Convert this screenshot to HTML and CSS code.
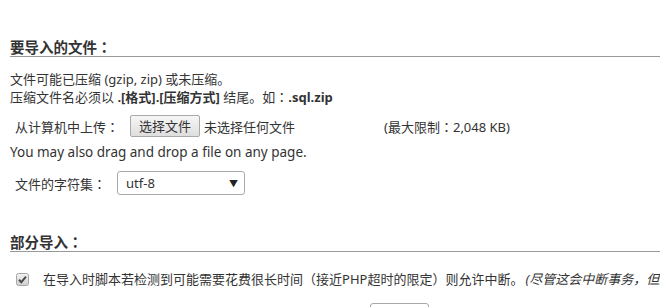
FILE: index.html
```html
<!DOCTYPE HTML>
<html>
<head>
<meta http-equiv="Content-Type" content="text/html; charset=utf-8">
<title>导入</title>
<link rel="stylesheet" href="styles.css">
</head>
<body>
	<div id="import">
		<div class="options">
			<h3 class="title">要导入的文件<span class="colon">：</span></h3>
			<p class="intro">文件可能已压缩 (gzip, zip) 或未压缩。<br>压缩文件名必须以 <b>.[格式].[压缩方式]</b> 结尾。如<span class="colon">：</span><b>.sql.zip</b></p>
			<div class="row upload">
				<label class="label">从计算机中上传<span class="colon">：</span></label>
				<span class="button">选择文件</span>
				<span class="none">未选择任何文件</span>
				<span class="limit">(最大限制<span class="colon">：</span>2,048 KB)</span>
			</div>
			<div class="note">You may also drag and drop a file on any page.</div>
			<div class="row charset">
				<label class="label">文件的字符集<span class="colon">：</span></label>
				<div class="select">utf-8<span class="arrow">&#9660;</span></div>
			</div>
		</div>
		<div class="options">
			<h3 class="title second">部分导入<span class="colon">：</span></h3>
			<div class="row check">
				<span class="checkbox">
					<svg width="13" height="13" viewBox="0 0 13 13">
						<defs>
							<linearGradient id="cb" x1="0" y1="0" x2="0" y2="1">
								<stop offset="0" stop-color="#f2f2f2"/>
								<stop offset="1" stop-color="#d0d0d0"/>
							</linearGradient>
						</defs>
						<rect x="0.5" y="0.5" width="12" height="12" rx="2" fill="url(#cb)" stroke="#a6a6a6"/>
						<path d="M3 6.8 L5.3 9.2 L10 3.6" fill="none" stroke="#4a4a4a" stroke-width="2"/>
					</svg>
				</span>
				<label>在导入时脚本若检测到可能需要花费很长时间<span class="colon">（</span>接近PHP超时的限定<span class="colon">）</span>则允许中断。<i>(尽管这会中断事务，但这对导入大文件是个很好的方法。)</i></label>
			</div>
			<div class="row skip">
				<label class="label">从第一个开始跳过这个数量的查询 (对于 SQL)<span class="colon">：</span></label>
				<span class="input"></span>
			</div>
		</div>
	</div>
</body>
</html>
```

FILE: styles.css
```css
html,body{margin:0;padding:0;background:#fff;overflow:hidden;}
body{
	font-family:"Noto Sans","Noto Sans CJK SC",sans-serif;
	font-size:13px;
	color:#333;
}
#import{width:1000px;padding-left:10px;}
/* 全角冒号、括号居中显示 */
.colon{font-family:"Noto Sans CJK JP",sans-serif;}
.title{
	margin:38px 0 0;
	font-size:14.5px;
	line-height:18px;
	font-weight:bold;
	border-bottom:1px solid #999;
}
.title.second{margin-top:38px;}
.intro{margin:13px 0 0;line-height:18px;}
.row{display:flex;align-items:center;white-space:nowrap;}
.upload{margin-top:9px;height:22px;}
.upload .label{padding-left:5px;width:115px;}
.button{
	box-sizing:border-box;
	height:22px;
	line-height:20px;
	padding:0 8px;
	border:1px solid #a9a9a9;
	border-radius:2px;
	background:linear-gradient(#f6f6f6,#dedede);
}
.none{margin-left:4px;}
.limit{margin-left:89px;}
.note{margin-top:6px;line-height:18px;font-size:13.5px;}
.charset{margin-top:10px;height:24px;}
.charset .label{padding-left:5px;width:102px;}
.select{
	box-sizing:border-box;
	display:flex;
	align-items:center;
	justify-content:space-between;
	width:128px;
	height:24px;
	padding:0 6px 0 8px;
	border:1px solid #aaa;
	border-radius:3px;
	background:#fff;
}
.arrow{font-size:9px;color:#222;}
.check{margin-top:18px;line-height:18px;}
.checkbox{display:flex;margin-left:6px;margin-right:14px;}
.check i{margin-left:2px;}
.skip{margin-top:15px;height:26px;}
.skip .label{padding-left:5px;width:355px;}
.input{
	box-sizing:border-box;
	width:59px;
	height:26px;
	border:1px solid #aaa;
	border-radius:3px;
}
```
